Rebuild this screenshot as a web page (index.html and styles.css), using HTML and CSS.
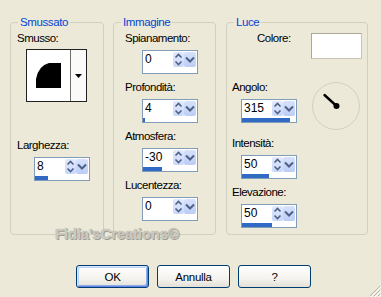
FILE: index.html
```html
<!DOCTYPE html>
<html lang="it">
<head>
<meta charset="utf-8">
<title>Smusso interno</title>
<link rel="stylesheet" href="styles.css">
</head>
<body>
<div class="dialog">
  <div class="groups">
    <fieldset class="group g1">
      <legend>Smussato</legend>
      <div class="body">
        <div class="lbl lbl-first">Smusso:</div>
        <div class="picker">
          <div class="picker-main">
            <svg width="25" height="25" viewBox="0 0 25 25"><path d="M0 25V16Q2.5 2.5 13 0H25V25Z" fill="#000"/></svg>
          </div>
          <div class="picker-btn">
            <svg width="7" height="4" viewBox="0 0 7 4"><path d="M0 0H7L3.5 4Z" fill="#000"/></svg>
          </div>
        </div>
        <div class="field field-width">
          <div class="lbl">Larghezza:</div>
          <div class="spin">
            <div class="spin-top"><span class="val">8</span><span class="ud"><svg width="11" height="15" viewBox="0 0 11 15"><path d="M2.5 5.5L5.5 2.5L8.5 5.5M2.5 9.5L5.5 12.5L8.5 9.5" fill="none" stroke="#4D6185" stroke-width="1.6"/></svg></span><span class="dd"><svg width="12" height="15" viewBox="0 0 12 15"><path d="M2 5.5L6 9.5L10 5.5" fill="none" stroke="#4D6185" stroke-width="2"/></svg></span></div>
            <div class="spin-bar"><div class="fill" style="width:13px"></div></div>
          </div>
        </div>
      </div>
    </fieldset>

    <fieldset class="group g2">
      <legend>Immagine</legend>
      <div class="body">
        <div class="field">
          <div class="lbl">Spianamento:</div>
          <div class="spin">
            <div class="spin-top"><span class="val">0</span><span class="ud"><svg width="11" height="15" viewBox="0 0 11 15"><path d="M2.5 5.5L5.5 2.5L8.5 5.5M2.5 9.5L5.5 12.5L8.5 9.5" fill="none" stroke="#4D6185" stroke-width="1.6"/></svg></span><span class="dd"><svg width="12" height="15" viewBox="0 0 12 15"><path d="M2 5.5L6 9.5L10 5.5" fill="none" stroke="#4D6185" stroke-width="2"/></svg></span></div>
            <div class="spin-bar"><div class="fill" style="width:0px"></div></div>
          </div>
        </div>
        <div class="field">
          <div class="lbl">Profondità:</div>
          <div class="spin">
            <div class="spin-top"><span class="val">4</span><span class="ud"><svg width="11" height="15" viewBox="0 0 11 15"><path d="M2.5 5.5L5.5 2.5L8.5 5.5M2.5 9.5L5.5 12.5L8.5 9.5" fill="none" stroke="#4D6185" stroke-width="1.6"/></svg></span><span class="dd"><svg width="12" height="15" viewBox="0 0 12 15"><path d="M2 5.5L6 9.5L10 5.5" fill="none" stroke="#4D6185" stroke-width="2"/></svg></span></div>
            <div class="spin-bar"><div class="fill" style="width:2px"></div></div>
          </div>
        </div>
        <div class="field">
          <div class="lbl">Atmosfera:</div>
          <div class="spin">
            <div class="spin-top"><span class="val">-30</span><span class="ud"><svg width="11" height="15" viewBox="0 0 11 15"><path d="M2.5 5.5L5.5 2.5L8.5 5.5M2.5 9.5L5.5 12.5L8.5 9.5" fill="none" stroke="#4D6185" stroke-width="1.6"/></svg></span><span class="dd"><svg width="12" height="15" viewBox="0 0 12 15"><path d="M2 5.5L6 9.5L10 5.5" fill="none" stroke="#4D6185" stroke-width="2"/></svg></span></div>
            <div class="spin-bar"><div class="fill" style="width:19px"></div></div>
          </div>
        </div>
        <div class="field">
          <div class="lbl">Lucentezza:</div>
          <div class="spin">
            <div class="spin-top"><span class="val">0</span><span class="ud"><svg width="11" height="15" viewBox="0 0 11 15"><path d="M2.5 5.5L5.5 2.5L8.5 5.5M2.5 9.5L5.5 12.5L8.5 9.5" fill="none" stroke="#4D6185" stroke-width="1.6"/></svg></span><span class="dd"><svg width="12" height="15" viewBox="0 0 12 15"><path d="M2 5.5L6 9.5L10 5.5" fill="none" stroke="#4D6185" stroke-width="2"/></svg></span></div>
            <div class="spin-bar"><div class="fill" style="width:0px"></div></div>
          </div>
        </div>
      </div>
    </fieldset>

    <fieldset class="group g3">
      <legend>Luce</legend>
      <div class="body">
        <div class="colore-row">
          <div class="lbl">Colore:</div>
          <div class="swatch"></div>
        </div>
        <div class="angle-row">
          <div class="field">
            <div class="lbl">Angolo:</div>
            <div class="spin">
              <div class="spin-top"><span class="val">315</span><span class="ud"><svg width="11" height="15" viewBox="0 0 11 15"><path d="M2.5 5.5L5.5 2.5L8.5 5.5M2.5 9.5L5.5 12.5L8.5 9.5" fill="none" stroke="#4D6185" stroke-width="1.6"/></svg></span><span class="dd"><svg width="12" height="15" viewBox="0 0 12 15"><path d="M2 5.5L6 9.5L10 5.5" fill="none" stroke="#4D6185" stroke-width="2"/></svg></span></div>
              <div class="spin-bar"><div class="fill" style="width:48px"></div></div>
            </div>
          </div>
          <svg class="dial" width="48" height="48" viewBox="0 0 48 48">
            <circle cx="24" cy="24" r="23.5" fill="none" stroke="#D2CFC3" stroke-width="1"/>
            <path d="M24.5 24L12.5 13" stroke="#000" stroke-width="2.4" stroke-linecap="round"/>
            <circle cx="24.5" cy="24" r="3" fill="#000"/>
          </svg>
        </div>
        <div class="field">
          <div class="lbl">Intensità:</div>
          <div class="spin">
            <div class="spin-top"><span class="val">50</span><span class="ud"><svg width="11" height="15" viewBox="0 0 11 15"><path d="M2.5 5.5L5.5 2.5L8.5 5.5M2.5 9.5L5.5 12.5L8.5 9.5" fill="none" stroke="#4D6185" stroke-width="1.6"/></svg></span><span class="dd"><svg width="12" height="15" viewBox="0 0 12 15"><path d="M2 5.5L6 9.5L10 5.5" fill="none" stroke="#4D6185" stroke-width="2"/></svg></span></div>
            <div class="spin-bar"><div class="fill" style="width:27px"></div></div>
          </div>
        </div>
        <div class="field">
          <div class="lbl">Elevazione:</div>
          <div class="spin">
            <div class="spin-top"><span class="val">50</span><span class="ud"><svg width="11" height="15" viewBox="0 0 11 15"><path d="M2.5 5.5L5.5 2.5L8.5 5.5M2.5 9.5L5.5 12.5L8.5 9.5" fill="none" stroke="#4D6185" stroke-width="1.6"/></svg></span><span class="dd"><svg width="12" height="15" viewBox="0 0 12 15"><path d="M2 5.5L6 9.5L10 5.5" fill="none" stroke="#4D6185" stroke-width="2"/></svg></span></div>
            <div class="spin-bar"><div class="fill" style="width:30px"></div></div>
          </div>
        </div>
      </div>
    </fieldset>
  </div>

  <div class="watermark">Fidia'sCreations©</div>

  <div class="footer">
    <button class="btn btn-default">OK</button>
    <button class="btn">Annulla</button>
    <button class="btn">?</button>
    <svg class="grip" width="12" height="12" viewBox="0 0 12 12">
      <path d="M11 1L1 11M11 5L5 11M11 9L9 11" stroke="#B9B5A8" stroke-width="1"/>
      <path d="M12 2L2 12M12 6L6 12M12 10L10 12" stroke="#FFFFFF" stroke-width="1"/>
    </svg>
  </div>
</div>
</body>
</html>
```

FILE: styles.css
```css
html, body {
  margin: 0;
  padding: 0;
}
body {
  width: 381px;
  height: 297px;
  overflow: hidden;
  background: #ECE9D8;
  font-family: "Liberation Sans", Arial, sans-serif;
  font-size: 11.5px;
  color: #000;
}
.dialog {
  position: relative;
  height: 297px;
}
.groups {
  display: flex;
  padding: 16px 0 0 10px;
}
.group {
  margin: 0;
  padding: 0;
  border: 1px solid #D0D0BF;
  border-radius: 4px;
  height: 219px;
  box-sizing: border-box;
  min-width: 0;
}
.g1 { width: 94px; }
.g2 { width: 103px; margin-left: 9px; }
.g3 { width: 142px; margin-left: 10px; }

.group legend {
  font-size: 11.5px;
  line-height: 13px;
  color: #0046D5;
  padding: 0 2px;
  margin-left: 7px;
  letter-spacing: -0.4px;
}

.lbl {
  line-height: 13px;
  letter-spacing: -0.5px;
  white-space: nowrap;
}

/* Smussato */
.g1 .body { padding-left: 6px; }
.lbl-first { margin-top: 3px; }
.picker {
  margin: 4px 0 0 9px;
  width: 61px;
  height: 53px;
  box-sizing: border-box;
  border: 1px solid #222;
  background: #fff;
  display: flex;
}
.picker-main {
  flex: 1;
  display: flex;
  align-items: center;
  justify-content: center;
}
.picker-btn {
  width: 15px;
  border-left: 1px solid #6d6d6d;
  background: #FAFAF8;
  display: flex;
  align-items: center;
  justify-content: center;
}
.field-width { margin-top: 37px; }

/* Immagine */
.g2 .body { padding: 3px 0 0 11px; }
.field + .field { margin-top: 7px; }

/* Luce */
.g3 .body { padding-left: 5px; }
.colore-row {
  display: flex;
  align-items: flex-start;
}
.colore-row .lbl { margin: 3px 0 0 25px; }
.swatch {
  margin: 4px 5px 0 auto;
  width: 51px;
  height: 26px;
  box-sizing: border-box;
  border: 1px solid #ACA899;
  border-right-color: #C9C6B8;
  border-bottom-color: #C9C6B8;
  background: #fff;
}
.angle-row {
  display: flex;
  align-items: flex-start;
  margin-top: 22px;
}
.angle-row + .field { margin-top: 7px; }
.dial {
  display: block;
  margin: 1px 7px 0 auto;
}
.g3 .spin { margin-left: 9px; }

/* spin edit */
.spin {
  margin: 5px 0 0 17px;
  width: 56px;
  height: 24px;
  box-sizing: border-box;
  border: 1px solid #7F9DB9;
  background: #fff;
  display: flex;
  flex-direction: column;
}
.spin-top {
  display: flex;
  height: 17px;
}
.val {
  flex: 1;
  padding-left: 2px;
  font-size: 12px;
  line-height: 17px;
}
.ud, .dd {
  display: block;
  height: 15px;
  margin-top: 1px;
  box-sizing: border-box;
  border-radius: 2px;
  background: linear-gradient(180deg, #E1E9FD 0%, #C9D7F9 100%);
}
.ud { width: 11px; }
.dd {
  width: 12px;
  margin-right: 1px;
  background: linear-gradient(180deg, #D6E1FC 0%, #BCCDF6 100%);
}
.ud svg, .dd svg { display: block; }
.spin-bar {
  height: 5px;
  padding-top: 1px;
  box-sizing: border-box;
}
.fill {
  height: 4px;
  background: #316AC5;
}

/* watermark overlay */
.watermark {
  position: absolute;
  left: 55px;
  top: 225px;
  font-size: 15px;
  line-height: 17px;
  font-weight: bold;
  letter-spacing: -0.2px;
  color: #CCC9BF;
  text-shadow: 1px 1px 0 #A09D94, 0 0 1px #A09D94;
  white-space: nowrap;
}

/* footer */
.footer {
  display: flex;
  gap: 8px;
  padding-left: 76px;
  margin-top: 30px;
  height: 32px;
}
.btn {
  width: 73px;
  height: 23px;
  padding: 0;
  border: 1px solid #003C74;
  border-radius: 3px;
  background: linear-gradient(180deg, #FFFFFF 0%, #F4F3EE 60%, #E3E0D6 100%);
  font-family: "Liberation Sans", Arial, sans-serif;
  font-size: 11.5px;
  color: #000;
  letter-spacing: -0.3px;
}
.btn-default {
  box-shadow: inset 1px 1px 0 #CEE7FF, inset -1px -1px 0 #6982EE, inset 2px 2px 0 #BCD4F6, inset -2px -2px 0 #89ADE4;
}
.grip {
  display: block;
  margin-left: auto;
  align-self: flex-end;
}
```
